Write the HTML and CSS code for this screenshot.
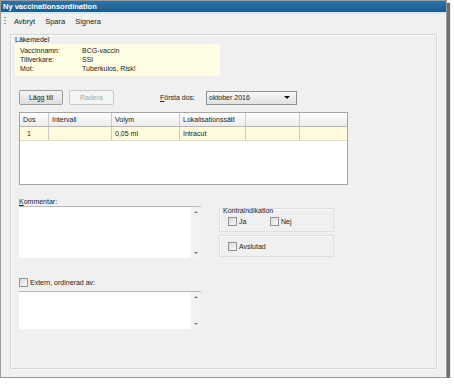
FILE: index.html
```html
<!DOCTYPE html>
<html lang="sv">
<head>
    <meta charset="UTF-8">
    <title>Ny vaccinationsordination</title>
    <link rel="stylesheet" href="styles.css">
</head>
<body>

<div class="window">
    <div class="titlebar">Ny vaccinationsordination</div>

    <div class="menubar">
        <span class="grip"></span>
        <span class="menu-item">Avbryt</span>
        <span class="menu-item">Spara</span>
        <span class="menu-item">Signera</span>
    </div>

    <div class="panel">
        <div class="group-label">Läkemedel</div>
        <div class="drug-info">
            <div class="info-row"><span class="info-key">Vaccinnamn:</span><span>BCG-vaccin</span></div>
            <div class="info-row"><span class="info-key">Tillverkare:</span><span>SSI</span></div>
            <div class="info-row"><span class="info-key">Mot:</span><span>Tuberkulos, Risk!</span></div>
        </div>

        <div class="toolbar">
            <button class="btn btn-default">Lägg till</button>
            <button class="btn" disabled>Radera</button>
            <span class="dose-label"><u>F</u>örsta dos:</span>
            <div class="select">
                <span>oktober 2016</span>
                <span class="select-arrow"></span>
            </div>
        </div>

        <div class="grid">
            <table>
                <thead>
                    <tr>
                        <th class="col-dos">Dos</th>
                        <th class="col-int">Intervall</th>
                        <th class="col-vol">Volym</th>
                        <th class="col-lok">Lokalisationssätt</th>
                        <th class="col-e1"></th>
                        <th></th>
                    </tr>
                </thead>
                <tbody>
                    <tr class="row-selected">
                        <td class="center">1</td>
                        <td></td>
                        <td>0,05 ml</td>
                        <td>Intracut</td>
                        <td></td>
                        <td></td>
                    </tr>
                </tbody>
            </table>
        </div>

        <div class="lower">
            <div class="left-col">
                <div class="field-label"><u>K</u>ommentar:</div>
                <div class="memo memo-comment">
                    <div class="memo-scroll">
                        <span class="arrow-up"></span>
                        <span class="arrow-down"></span>
                    </div>
                </div>

                <label class="check check-extern"><span class="box"></span>Extern, ordinerad av:</label>
                <div class="memo memo-extern">
                    <div class="memo-scroll">
                        <span class="arrow-up"></span>
                        <span class="arrow-down"></span>
                    </div>
                </div>
            </div>

            <div class="right-col">
                <div class="groupbox group-contra">
                    <div class="groupbox-title">Kontraindikation</div>
                    <div class="check-row">
                        <label class="check check-ja"><span class="box"></span>Ja</label>
                        <label class="check"><span class="box"></span>Nej</label>
                    </div>
                </div>
                <div class="groupbox group-done">
                    <label class="check"><span class="box"></span>Avslutad</label>
                </div>
            </div>
        </div>
    </div>
</div>

</body>
</html>
```

FILE: styles.css
```css
body {
    margin: 0;
    padding: 0;
    background-color: #fff;
    font-family: 'Liberation Sans', Arial, sans-serif;
    font-size: 7px;
    color: #222;
}
.window {
    width: 445px;
    height: 376px;
    border: 1px solid #9a9a9a;
    background-color: #f0f0f0;
    box-shadow: 3px 3px 1px #6f6f6f;
    display: flex;
    flex-direction: column;
}
.titlebar {
    height: 11px;
    line-height: 11px;
    padding-left: 2px;
    background: linear-gradient(#2f72a6, #1c5d8f);
    color: #fff;
    font-weight: bold;
    font-size: 7.5px;
    border-bottom: 2px solid #dbe6ef;
}
.menubar {
    height: 15px;
    display: flex;
    align-items: center;
    padding-left: 3px;
}
.grip {
    width: 2px;
    height: 9px;
    margin-right: 8px;
    background: repeating-linear-gradient(#9a9a9a 0 1px, transparent 1px 3px);
}
.menu-item {
    font-size: 7.5px;
    margin-right: 10px;
}
.panel {
    margin: 5px 9px 8px 9px;
    flex: 1;
    border: 1px solid #d6d6d6;
    box-shadow: inset 1px 1px #fafafa, 1px 1px #fafafa;
    display: flex;
    flex-direction: column;
}
.group-label {
    margin: 1px 0 0 4px;
    height: 8px;
    line-height: 8px;
}
.drug-info {
    margin-left: 4px;
    width: 200px;
    height: 30px;
    padding: 2px 0 0 5px;
    background-color: #fffde4;
}
.info-row {
    display: flex;
    line-height: 9px;
}
.info-key {
    width: 62px;
}
.toolbar {
    display: flex;
    align-items: center;
    margin: 14px 0 0 8px;
    height: 15px;
}
.btn {
    width: 44px;
    height: 15px;
    margin: 0 6px 0 0;
    padding: 0;
    font-family: inherit;
    font-size: 7px;
    color: #222;
    border: 1px solid #9c9c9c;
    border-radius: 2px;
    background: linear-gradient(#f4f4f4, #dedede);
}
.btn:disabled {
    width: 45px;
    color: #a8a8a8;
    border-color: #c8c8c8;
    background: #f4f4f4;
}
.dose-label {
    margin-left: 40px;
    width: 46px;
}
.select {
    box-sizing: border-box;
    width: 91px;
    height: 14px;
    border: 1px solid #8f8f8f;
    background: linear-gradient(#f6f6f6, #e2e2e2);
    display: flex;
    align-items: center;
    justify-content: space-between;
    padding-left: 2px;
}
.select-arrow {
    width: 0;
    height: 0;
    margin-right: 6px;
    border-left: 3px solid transparent;
    border-right: 3px solid transparent;
    border-top: 3px solid #111;
}
.grid {
    margin: 7px 0 0 8px;
    width: 327px;
    height: 71px;
    border: 1px solid #a5a5a5;
    background-color: #fff;
}
table {
    width: 100%;
    border-collapse: collapse;
    table-layout: fixed;
}
th, td {
    height: 13px;
    padding: 0 0 0 3px;
    text-align: left;
    font-weight: normal;
    border: 1px solid #c9c9c9;
    border-top: none;
    white-space: nowrap;
    overflow: hidden;
}
th:first-child, td:first-child {
    border-left: none;
}
th:last-child, td:last-child {
    border-right: none;
}
th {
    background: linear-gradient(#fefefe, #ececec);
    border-bottom-color: #b5b5b5;
}
.row-selected td {
    background-color: #fffbdc;
    border-bottom-color: #e0ddc8;
}
td.center {
    padding-left: 7px;
}
.col-dos { width: 25px; }
.col-int { width: 59px; }
.col-vol { width: 64px; }
.col-lok { width: 62px; }
.col-e1 { width: 50px; }
.lower {
    display: flex;
    margin: 13px 0 0 8px;
}
.left-col {
    width: 182px;
    display: flex;
    flex-direction: column;
}
.field-label {
    height: 8px;
    line-height: 8px;
}
.memo {
    border-top: 1px solid #b8b8b8;
    background-color: #fff;
    display: flex;
    justify-content: flex-end;
}
.memo-comment {
    height: 51px;
}
.memo-extern {
    height: 37px;
    margin-top: 4px;
}
.memo-scroll {
    width: 10px;
    background-color: #f3f3f3;
    border-left: 1px solid #f8f8f8;
    display: flex;
    flex-direction: column;
    justify-content: space-between;
    align-items: center;
    padding: 4px 0;
}
.arrow-up, .arrow-down {
    width: 0;
    height: 0;
    border-left: 2px solid transparent;
    border-right: 2px solid transparent;
}
.arrow-up {
    border-bottom: 2px solid #777;
}
.arrow-down {
    border-top: 2px solid #777;
}
.check {
    display: flex;
    align-items: center;
}
.box {
    width: 7px;
    height: 7px;
    margin-right: 2px;
    border: 1px solid #939393;
    background: linear-gradient(135deg, #dcdcdc, #f8f8f8);
}
.check-extern {
    margin-top: 19px;
    height: 10px;
}
.right-col {
    margin-left: 18px;
    width: 115px;
    display: flex;
    flex-direction: column;
}
.groupbox {
    border: 1px solid #dedede;
    box-shadow: inset 1px 1px #fafafa;
    box-sizing: border-box;
    padding-left: 8px;
}
.group-contra {
    margin-top: 10px;
    height: 24px;
    padding-left: 3px;
}
.groupbox-title {
    height: 8px;
    line-height: 8px;
    margin-top: -2px;
}
.check-row {
    display: flex;
    margin: 2px 0 0 5px;
}
.check-ja {
    width: 42px;
}
.group-done {
    margin-top: 3px;
    height: 22px;
    display: flex;
    align-items: center;
}
```
